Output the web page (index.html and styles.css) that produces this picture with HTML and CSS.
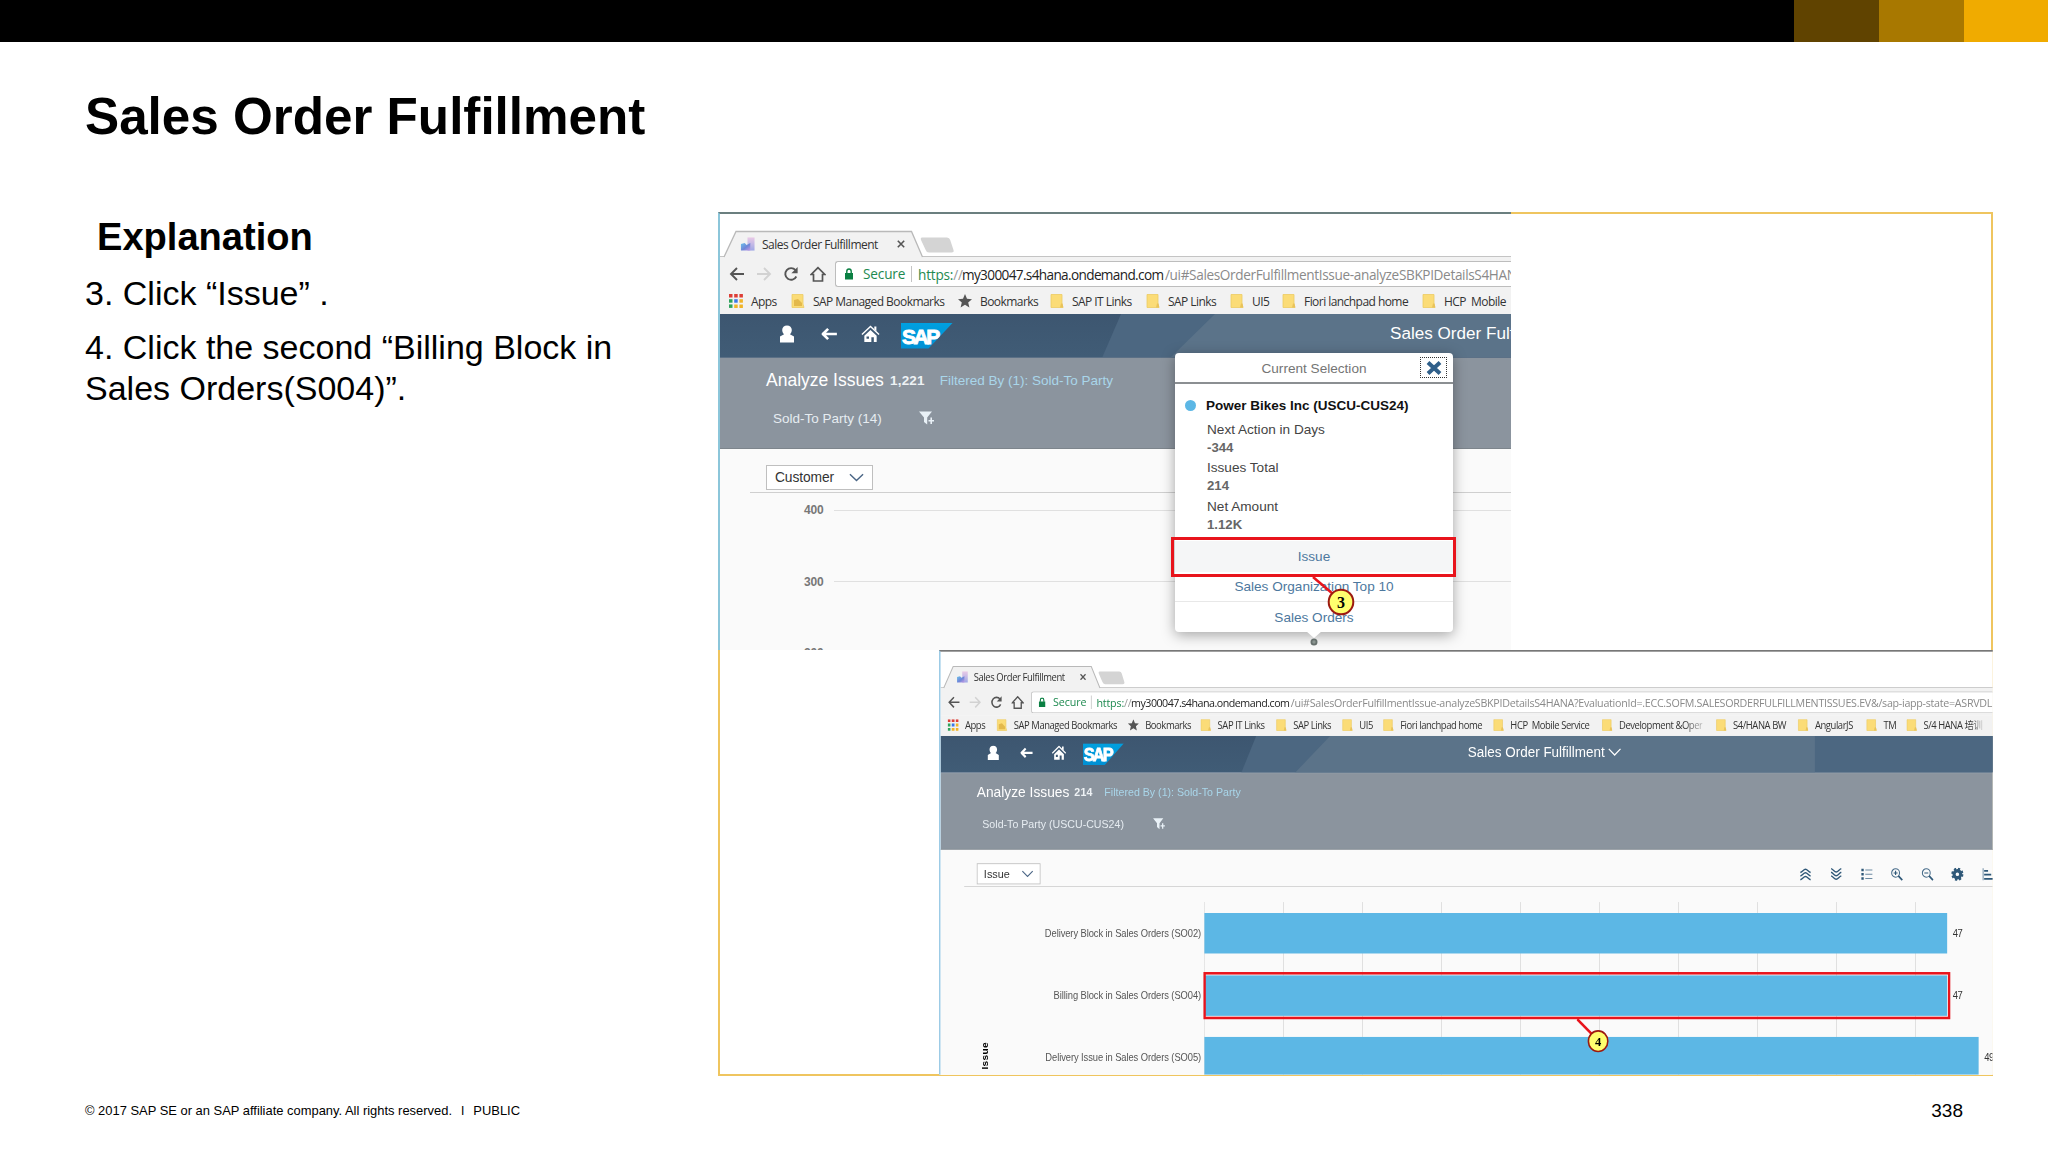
FILE: index.html
```html
<!DOCTYPE html>
<html lang="en">
<head>
<meta charset="utf-8">
<title>Sales Order Fulfillment</title>
<link rel="stylesheet" href="styles.css">
</head>
<body>
<svg class="defs" width="0" height="0" aria-hidden="true">
  <defs>
    <linearGradient id="favg" x1="0" y1="0" x2="1" y2="1"><stop offset="0" stop-color="#6cc0ea"/><stop offset=".55" stop-color="#6f86d8"/><stop offset="1" stop-color="#c79be4"/></linearGradient>
    <linearGradient id="favb" x1="0" y1="0" x2="0" y2="1"><stop offset="0" stop-color="#e9c9e6"/><stop offset="1" stop-color="#9fa8e6"/></linearGradient>
    <symbol id="i-fav" viewBox="0 0 16 16"><rect x="8" y="1" width="7.500" height="14" fill="url(#favb)"/><path d="M1 8l4-1 2 2 4-2v8H1z" fill="url(#favg)"/></symbol>
    <symbol id="i-tabx" viewBox="0 0 8 8"><path d="M.8.8l6.400 6.400M7.200.8L.8 7.200" stroke="#555" stroke-width="1.600"/></symbol>
    <symbol id="i-back" viewBox="0 0 16 16"><path d="M15 8H2M8 2L2 8l6 6" fill="none" stroke="#555" stroke-width="1.900"/></symbol>
    <symbol id="i-fwd" viewBox="0 0 16 16"><path d="M1 8h13M8 2l6 6-6 6" fill="none" stroke="#d2d2d2" stroke-width="1.900"/></symbol>
    <symbol id="i-reload" viewBox="0 0 16 16"><path d="M13.300 10.500A5.800 5.800 0 1 1 12.500 4.200" fill="none" stroke="#555" stroke-width="1.900"/><path d="M14.600 1v6.200H8.400z" fill="#555"/></symbol>
    <symbol id="i-home" viewBox="0 0 16 16"><path d="M8 1.600L1.200 8.500h2.300V15h9V8.500h2.300z" fill="none" stroke="#555" stroke-width="1.700"/></symbol>
    <symbol id="i-lock" viewBox="0 0 10 12"><path d="M1 5h8v6.500H1z" fill="#0b8043"/><path d="M2.800 5.500V3.200a2.200 2.200 0 0 1 4.400 0v2.300" fill="none" stroke="#0b8043" stroke-width="1.400"/></symbol>
    <symbol id="i-apps" viewBox="0 0 14 14"><path d="M0 0h3.500v3.500H0zM5.200 0h3.500v3.500H5.200zM10.400 0h3.500v3.500h-3.500z" fill="#dd3e36"/><path d="M0 5.200h3.500v3.500H0z" fill="#2fa35c"/><path d="M5.200 5.200h3.500v3.500H5.200z" fill="#3b78e7"/><path d="M10.400 5.200h3.500v3.500h-3.500z" fill="#f0b428"/><path d="M0 10.400h3.500v3.500H0z" fill="#2fa35c"/><path d="M5.200 10.400h3.500v3.500H5.200zM10.400 10.400h3.500v3.500h-3.500z" fill="#f0b428"/></symbol>
    <symbol id="i-folder" viewBox="0 0 14 14"><path d="M1 .5h11v9.500l1 3.500H1z" fill="#fbdc77" stroke="#eccb62" stroke-width=".8"/><path d="M11 9.500h1.500l.8 4H10z" fill="#e9c35a"/></symbol>
    <symbol id="i-folder2" viewBox="0 0 14 14"><path d="M1 .5h11v9.500l1 3.500H1z" fill="#fbdc77" stroke="#eccb62" stroke-width=".8"/><path d="M3 6l4-1 4 4v3H3z" fill="#e3b94c"/></symbol>
    <symbol id="i-star" viewBox="0 0 14 14"><path d="M7 0l2 4.800 5 .4-3.800 3.300L11.400 13.500 7 10.800 2.600 13.500l1.200-5L0 5.200l5-.4z" fill="#555"/></symbol>
    <symbol id="i-person" viewBox="0 0 16 18"><path d="M8 .5c2.900 0 4.800 1.900 4.800 4.600 0 1.900-.8 3.300-1.900 4.200L15 11.500V17.500H1v-6l4.100-2.200C4 8.400 3.200 7 3.200 5.100 3.200 2.400 5.100.5 8 .5z" fill="#fff"/></symbol>
    <symbol id="i-left" viewBox="0 0 20 16"><path d="M19 8H4M9 2.200L3 8l6 5.800" fill="none" stroke="#fff" stroke-width="3" stroke-linejoin="round"/></symbol>
    <symbol id="i-house" viewBox="0 0 20 18"><path d="M1 9.500L10 1l9 8.500" fill="none" stroke="#fff" stroke-width="1.500"/><path d="M14 1h2.200V6L14 4z" fill="#fff"/><path fill-rule="evenodd" d="M10 4.800l6.500 6v6.700h-3v-5.200h-2.600v5.200H3.500v-6.700zM5.800 11.500v2.600h2.600v-2.600z" fill="#fff"/></symbol>
    <symbol id="i-filter" viewBox="0 0 18 14"><path d="M1 .5h13L9.200 6.500v7L6 11V6.500z" fill="#e9f1f7"/><path d="M13.200 6.500v6.500M10.500 9.700H16" stroke="#e9f1f7" stroke-width="1.600"/></symbol>
    <symbol id="i-chev" viewBox="0 0 16 9"><path d="M1 1l7 6.800L15 1" fill="none" stroke="currentColor" stroke-width="1.500"/></symbol>
    <symbol id="i-up" viewBox="0 0 16 16"><path d="M1.500 6C4.500 5 5.500 2 8 2s3.500 3 6.500 4M1.500 10.300c3-1 4-4 6.500-4s3.500 3 6.500 4M1.500 14.600c3-1 4-4 6.500-4s3.500 3 6.500 4" fill="none" stroke="#2f5878" stroke-width="1.700"/></symbol>
    <symbol id="i-list" viewBox="0 0 16 16"><path d="M1 1.500h3v3H1zM1 6.500h3v3H1zM1 11.500h3v3H1z" fill="#2f5878"/><path d="M6 3h9M6 8h9M6 13h9" stroke="#6d8aa2" stroke-width="1.300"/></symbol>
    <symbol id="i-zin" viewBox="0 0 16 16"><circle cx="6.500" cy="6.500" r="5" fill="none" stroke="#466b89" stroke-width="1.300"/><path d="M6.500 4v5M4 6.500h5" stroke="#2f5878" stroke-width="1.400"/><path d="M10 10l5 5" stroke="#2f5878" stroke-width="2.200"/></symbol>
    <symbol id="i-zout" viewBox="0 0 16 16"><circle cx="6.500" cy="6.500" r="5" fill="none" stroke="#466b89" stroke-width="1.300"/><path d="M4 6.500h5" stroke="#2f5878" stroke-width="1.400"/><path d="M10 10l5 5" stroke="#2f5878" stroke-width="2.200"/></symbol>
    <symbol id="i-gear" viewBox="0 0 16 16"><circle cx="8" cy="8" r="4.200" fill="none" stroke="#2f5878" stroke-width="4"/><circle cx="8" cy="8" r="6.600" fill="none" stroke="#2f5878" stroke-width="2.400" stroke-dasharray="2.800 2.380"/></symbol>
    <symbol id="i-bars" viewBox="0 0 16 16"><path d="M1.700 1v14" stroke="#6d8aa2" stroke-width="1.200"/><path d="M3 4h5M3 8.500h9M3 13.500h13" stroke="#2f5878" stroke-width="2.200"/></symbol>
    <symbol id="i-close" viewBox="0 0 16 14"><path d="M2 1.500l12 11M14 1.500l-12 11" stroke="#2f5f8a" stroke-width="4"/></symbol>
  </defs>
</svg>

<div class="slide">
  <div class="brand-bar"><i class="gold-1"></i><i class="gold-2"></i><i class="gold-3"></i></div>
  <h1 class="title">Sales Order Fulfillment</h1>

  <main class="content">
    <section class="notes">
      <h2>Explanation</h2>
      <p>3. Click “Issue” .</p>
      <p>4. Click the second “Billing Block in<br>Sales Orders(S004)”.</p>
    </section>

    <section class="frame">
      <div class="shot shot-a">
        <div class="win">
          <div class="tabs">
            <svg class="tabshape" viewBox="0 0 240 28"><path d="M6 27L18 1.500H193.500L204.500 27" fill="#f2f2f2" stroke="#b9b9b9" stroke-width="1.300"/><path d="M204 7.500h25q2.500 0 3.200 2.500l3.300 10q.8 2.500-2 2.500H211q-2.500 0-3.300-2.500l-4.700-10q-.8-2.500 1-2.500z" fill="#d4d4d4"/></svg>
            <svg class="fav"><use href="#i-fav"/></svg><span class="tabname">Sales Order Fulfillment</span><svg class="tabx"><use href="#i-tabx"/></svg>
          </div>
          <div class="nav">
            <svg><use href="#i-back"/></svg><svg><use href="#i-fwd"/></svg><svg><use href="#i-reload"/></svg><svg><use href="#i-home"/></svg>
            <div class="omni"><svg class="lock"><use href="#i-lock"/></svg><span class="secure">Secure</span><span class="url"><span class="scheme">https:<b>//</b></span><span class="host">my300047.s4hana.ondemand.com</span><span class="path">/ui#SalesOrderFulfillmentIssue-analyzeSBKPIDetailsS4HANA</span></span></div>
          </div>
          <div class="marks">
            <span><svg><use href="#i-apps"/></svg>Apps</span><span><svg><use href="#i-folder2"/></svg>SAP Managed Bookmarks</span><span><svg><use href="#i-star"/></svg>Bookmarks</span><span><svg><use href="#i-folder"/></svg>SAP IT Links</span><span><svg><use href="#i-folder"/></svg>SAP Links</span><span><svg><use href="#i-folder"/></svg>UI5</span><span><svg><use href="#i-folder"/></svg>Fiori lanchpad home</span><span><svg><use href="#i-folder"/></svg>HCP&nbsp; Mobile</span>
          </div>
          <div class="shell">
            <svg class="facets" viewBox="0 0 1339 44" preserveAspectRatio="xMinYMin slice"><path d="M401 0h938v44H382z" fill="#4c6781"/><path d="M495 0h616v44H450z" fill="#5b7389"/></svg>
            <svg class="person"><use href="#i-person"/></svg><svg class="left"><use href="#i-left"/></svg><svg class="house"><use href="#i-house"/></svg>
            <span class="logo"><b>SAP</b></span><span class="app">Sales Order Fulfillment</span>
          </div>
          <div class="filterbar">
            <div class="line1"><span class="name">Analyze Issues</span><b class="count">1,221</b><span class="by">Filtered By (1): Sold-To Party</span></div>
            <div class="line2"><span class="party">Sold-To Party (14)</span><svg><use href="#i-filter"/></svg></div>
          </div>
          <div class="body">
            <div class="tools"><div class="select select-a">Customer<svg><use href="#i-chev"/></svg></div></div>
            <div class="plot">
              <div class="tick"><b>400</b><i></i></div>
              <div class="tick"><b>300</b><i></i></div>
              <div class="tick"><b>200</b><i></i></div>
            </div>
          </div>
        </div>
        <div class="popover">
          <header><span>Current Selection</span><div class="close"><svg><use href="#i-close"/></svg></div></header>
          <div class="facts">
            <h3>Power Bikes Inc (USCU-CUS24)</h3>
            <dl><dt>Next Action in Days</dt><dd>-344</dd><dt>Issues Total</dt><dd>214</dd><dt>Net Amount</dt><dd>1.12K</dd></dl>
          </div>
          <nav><a class="on">Issue</a><a class="org">Sales Organization Top 10</a><a class="ord">Sales Orders</a></nav>
          <svg class="beak" viewBox="0 0 20 16"><path d="M2 0l8 7 8-7z" fill="#fff"/><circle cx="10" cy="11" r="2.600" fill="#8a9590" stroke="#66706d" stroke-width="1.800"/></svg>
        </div>
        <div class="mark mark-3"></div>
        <svg class="call call-3" viewBox="0 0 44 44"><path d="M1 1l20 17" stroke="#e8141c" stroke-width="2.500"/><circle cx="29" cy="26" r="12.300" fill="#ffff6e" stroke="#9c1a10" stroke-width="2"/><text x="29" y="31.500" text-anchor="middle">3</text></svg>
      </div>

      <div class="shot shot-b">
        <div class="scaled">
        <div class="win">
          <div class="tabs">
            <svg class="tabshape" viewBox="0 0 240 28"><path d="M6 27L18 1.500H193.500L204.500 27" fill="#f2f2f2" stroke="#b9b9b9" stroke-width="1.300"/><path d="M204 7.500h25q2.500 0 3.200 2.500l3.300 10q.8 2.500-2 2.500H211q-2.500 0-3.300-2.500l-4.700-10q-.8-2.500 1-2.500z" fill="#d4d4d4"/></svg>
            <svg class="fav"><use href="#i-fav"/></svg><span class="tabname">Sales Order Fulfillment</span><svg class="tabx"><use href="#i-tabx"/></svg>
          </div>
          <div class="nav">
            <svg><use href="#i-back"/></svg><svg><use href="#i-fwd"/></svg><svg><use href="#i-reload"/></svg><svg><use href="#i-home"/></svg>
            <div class="omni"><svg class="lock"><use href="#i-lock"/></svg><span class="secure">Secure</span><span class="url"><span class="scheme">https:<b>//</b></span><span class="host">my300047.s4hana.ondemand.com</span><span class="path">/ui#SalesOrderFulfillmentIssue-analyzeSBKPIDetailsS4HANA?EvaluationId=.ECC.SOFM.SALESORDERFULFILLMENTISSUES.EV&amp;/sap-iapp-state=ASRVDL</span></span></div>
          </div>
          <div class="marks">
            <span><svg><use href="#i-apps"/></svg>Apps</span><span><svg><use href="#i-folder2"/></svg>SAP Managed Bookmarks</span><span><svg><use href="#i-star"/></svg>Bookmarks</span><span><svg><use href="#i-folder"/></svg>SAP IT Links</span><span><svg><use href="#i-folder"/></svg>SAP Links</span><span><svg><use href="#i-folder"/></svg>UI5</span><span><svg><use href="#i-folder"/></svg>Fiori lanchpad home</span><span><svg><use href="#i-folder"/></svg>HCP&nbsp; Mobile Service</span><span><svg><use href="#i-folder"/></svg><em>Development &amp;Oper</em></span><span><svg><use href="#i-folder"/></svg>S4/HANA BW</span><span><svg><use href="#i-folder"/></svg>AngularJS</span><span><svg><use href="#i-folder"/></svg>TM</span><span><svg><use href="#i-folder"/></svg><em>S/4 HANA 培训</em></span>
          </div>
          <div class="shell">
            <svg class="facets" viewBox="0 0 1339 44" preserveAspectRatio="xMinYMin slice"><path d="M401 0h938v44H382z" fill="#4c6781"/><path d="M495 0h616v44H450z" fill="#5b7389"/></svg>
            <svg class="person"><use href="#i-person"/></svg><svg class="left"><use href="#i-left"/></svg><svg class="house"><use href="#i-house"/></svg>
            <span class="logo"><b>SAP</b></span><span class="app">Sales Order Fulfillment</span><svg class="appchev"><use href="#i-chev"/></svg>
          </div>
          <div class="filterbar">
            <div class="line1"><span class="name">Analyze Issues</span><b class="count">214</b><span class="by">Filtered By (1): Sold-To Party</span></div>
            <div class="line2"><span class="party">Sold-To Party (USCU-CUS24)</span><svg><use href="#i-filter"/></svg></div>
          </div>
          <div class="body">
            <div class="tools"><div class="select select-b">Issue<svg><use href="#i-chev"/></svg></div>
              <div class="icons"><svg><use href="#i-up"/></svg><svg class="flip"><use href="#i-up"/></svg><svg><use href="#i-list"/></svg><svg><use href="#i-zin"/></svg><svg><use href="#i-zout"/></svg><svg><use href="#i-gear"/></svg><svg><use href="#i-bars"/></svg></div>
            </div>
            <div class="bars">
              <div class="axis"><span>Issue</span></div>
              <div class="labels"><span>Delivery Block in Sales Orders (SO02)</span><span>Billing Block in Sales Orders (SO04)</span><span>Delivery Issue in Sales Orders (SO05)</span></div>
              <div class="lanes">
                <div class="lane"><i style="width:944px"></i><span>47</span></div>
                <div class="lane"><i style="width:944px"></i><span>47</span></div>
                <div class="lane"><i style="width:984px"></i><span>49</span></div>
              </div>
            </div>
          </div>
        </div>
        <div class="mark mark-4"></div>
        <svg class="call call-4" viewBox="0 0 44 44"><path d="M1 1l20 19" stroke="#e8141c" stroke-width="3"/><circle cx="27.500" cy="27" r="12.300" fill="#ffff6e" stroke="#9c1a10" stroke-width="2"/><text x="27.500" y="32.500" text-anchor="middle">4</text></svg>
        </div>
      </div>
    </section>
  </main>

  <footer class="foot"><span>© 2017 SAP SE or an SAP affiliate company. All rights reserved.<i>ǀ</i>PUBLIC</span><b>338</b></footer>
</div>
</body>
</html>
```

FILE: styles.css
```css
* { box-sizing: border-box; }
body { margin: 0; background: #fff; font-family: "Liberation Sans", Arial, sans-serif; color: #000; }
svg { flex: none; display: block; }
.defs { position: absolute; }
.slide { width: 2048px; height: 1152px; display: flex; flex-direction: column; overflow: hidden; }

.brand-bar { height: 42px; flex: none; background: #000; display: flex; justify-content: flex-end; }
.brand-bar i { width: 85px; }
.gold-1 { background: #604300; }
.gold-2 { background: #a87800; }
.brand-bar .gold-3 { background: #f0ab00; width: 84px; }

.title { margin: 0; padding-left: 85px; height: 170px; flex: none; font-size: 51.200px; line-height: 60px; padding-top: 45px; white-space: nowrap; }
.content { display: flex; height: 864px; flex: none; }
.notes { width: 718px; flex: none; padding-left: 85px; font-size: 34px; line-height: 41px; white-space: nowrap; }
.notes h2 { margin: 5px 0 15px 12px; font-size: 38.100px; line-height: 41px; }
.notes p { margin: 0 0 13px; }

.frame { position: relative; width: 1275px; display: flex; flex-direction: column; border: 2px solid #efc55f; }
.shot { position: relative; overflow: hidden; flex: none; }
.shot-a { width: 793px; height: 438px; margin: -2px 0 0 -2px; }
.shot-b { width: 1054px; height: 425px; margin-left: 219px; }
.scaled { width: 1339px; height: 504px; transform: scale(.787, .843); transform-origin: 0 0; }

/* browser window */
.win { width: 100%; height: 100%; display: flex; flex-direction: column; background: #fff; border-left: 2px solid #8cc6da; border-top: 2px solid #6b7f7f; overflow: hidden; }
.scaled .win { border-left-color: #9ccbe6; border-top-color: #777; }
.tabs { position: relative; height: 43px; flex: none; display: flex; align-items: center; padding: 18px 0 0 20px; border-bottom: 1px solid #c4c4c4; font: 12px "Open Sans", "Noto Sans", sans-serif; color: #333; }
.tabshape { position: absolute; left: -2px; top: 16px; width: 240px; height: 28px; }
.fav { position: relative; width: 15px; height: 16px; }
.tabname { position: relative; width: 137px; padding-left: 7px; white-space: nowrap; letter-spacing: -.5px; }
.tabx { position: relative; width: 8px; height: 8px; margin-left: 5px; }
.nav { height: 33px; flex: none; display: flex; align-items: center; gap: 11px; padding: 1px 0 0 9px; background: #f2f2f2; }
.nav > svg { width: 16px; height: 16px; }
.omni { flex: 1; height: 26px; border: 1px solid #bdbdbd; border-right: 0; border-radius: 3px 0 0 3px; background: #fff; display: flex; align-items: center; padding-left: 8px; margin-left: -2px; overflow: hidden; font: 13.600px "Open Sans", "Noto Sans", sans-serif; white-space: nowrap; }
.lock { width: 10px; height: 12px; }
.secure { width: 49px; margin-left: 9px; flex: none; color: #1e8a50; letter-spacing: -.15px; border-right: 1px solid #c4c4c4; line-height: 16px; }
.url { display: flex; margin-left: 6px; }
.url span { flex: none; }
.scheme { color: #1e8a50; width: 44px; letter-spacing: -.2px; }
.scheme b { font-weight: 400; color: #999; }
.host { color: #222; width: 203px; letter-spacing: -.640px; }
.path { color: #8a8a8a; letter-spacing: -.360px; }
.marks { height: 24px; flex: none; display: flex; align-items: center; padding: 0 0 2px 9px; background: #f2f2f2; font: 12px "Open Sans", "Noto Sans", "Noto Sans CJK SC", sans-serif; color: #333; white-space: nowrap; letter-spacing: -.550px; }
.marks span { flex: none; display: flex; align-items: center; gap: 8px; height: 18px; }
.marks svg { width: 14px; height: 14px; }
.marks em { font-style: normal; -webkit-mask-image: linear-gradient(90deg, #000 78%, rgba(0,0,0,.25)); mask-image: linear-gradient(90deg, #000 78%, rgba(0,0,0,.25)); }
.marks span:nth-child(1) { width: 62px; }
.marks span:nth-child(2) { width: 167px; }
.marks span:nth-child(3) { width: 92px; }
.marks span:nth-child(4) { width: 96px; }
.marks span:nth-child(5) { width: 84px; }
.marks span:nth-child(6) { width: 52px; }
.marks span:nth-child(7) { width: 140px; }
.marks span:nth-child(8) { width: 138px; }
.marks span:nth-child(9) { width: 145px; }
.marks span:nth-child(10) { width: 104px; }
.marks span:nth-child(11) { width: 87px; }
.marks span:nth-child(12) { width: 51px; }

/* shell header */
.shell { position: relative; height: 44px; flex: none; display: flex; align-items: center; padding-left: 59px; background: linear-gradient(#3d5670, #405c76); border-bottom: 1px solid #5b7086; overflow: hidden; }
.facets { position: absolute; left: 0; top: 0; width: 1339px; height: 44px; }
.shell > *:not(.facets) { position: relative; }
.person { width: 16px; height: 18px; margin-top: -3px; }
.left { width: 20px; height: 14px; margin: -3px 0 0 24px; }
.house { width: 19px; height: 18px; margin: -3px 0 0 22px; }
.logo { width: 52px; height: 26px; margin-left: 21px; flex: none; background: linear-gradient(#00a0e0, #0090d4); clip-path: polygon(0 0, 100% 0, 53% 100%, 0 100%); color: #fff; font-size: 21px; line-height: 27px; letter-spacing: -2.500px; -webkit-text-stroke: .9px #fff; text-indent: 1px; }
.app { margin: -3px 0 0 437px; color: #fff; font-size: 17.100px; white-space: nowrap; }
.appchev { width: 17px; height: 10px; margin: -6px 0 0 4px; color: #fff; }

.filterbar { height: 91px; flex: none; background: #8b949e; border-bottom: 1px solid #7d858c; padding-left: 46px; white-space: nowrap; }
.line1 { display: flex; align-items: center; height: 44px; color: #fff; }
.name { width: 124px; font-size: 17.500px; }
.count { font-size: 13.500px; letter-spacing: .2px; padding-right: 15px; color: #eef2f5; }
.by { font-size: 13.500px; color: #a9d6ea; }
.line2 { display: flex; align-items: center; height: 32px; padding-left: 7px; color: #e6ecf1; font-size: 13.500px; }
.line2 svg { width: 18px; height: 14px; margin-left: 36px; }

.body { flex: 1; background: #fafafa; padding-left: 30px; overflow: hidden; }
.tools { height: 44px; border-bottom: 1px solid #cfcfcf; display: flex; align-items: center; padding: 16px 0 0 16px; }
.select { height: 25px; border: 1px solid #bfbfbf; background: #fff; display: flex; align-items: center; justify-content: space-between; padding: 0 8px; margin-top: -2px; font-size: 13.800px; color: #333; }
.select svg { width: 15px; height: 9px; color: #4a6585; }
.select-a { width: 107px; letter-spacing: -.1px; }
.select-b { width: 81px; }
.icons { display: flex; gap: 22.600px; margin: -1px -2px 0 auto; }
.icons svg { width: 16px; height: 16px; }
.flip { transform: scaleY(-1); }

.plot { padding: 9px 0 0 46px; }
.tick { display: flex; align-items: center; height: 16px; margin-bottom: 55.500px; color: #777; }
.tick b { width: 38px; padding-left: 8px; font-size: 12px; letter-spacing: -.2px; }
.tick i { flex: 1; height: 1px; background: #e0e0e0; }

.bars { display: flex; height: 230px; padding-top: 18px; }
.axis { width: 40px; position: relative; }
.axis span { position: absolute; left: 19px; top: 166px; writing-mode: vertical-rl; transform: rotate(180deg); font-weight: 700; font-size: 12px; letter-spacing: .4px; }
.labels { width: 265px; padding: 13px 4px 0 0; font-size: 11.900px; color: #555; text-align: right; letter-spacing: -.1px; white-space: nowrap; }
.labels span, .lane { display: flex; align-items: center; justify-content: flex-end; height: 48px; margin-bottom: 25.500px; }
.lanes { flex: 1; padding-top: 13px; overflow: hidden; background: repeating-linear-gradient(90deg, #e0e0e0 0 1px, transparent 1px 100.400px); }
.lane { justify-content: flex-start; gap: 7px; font-size: 12px; color: #333; letter-spacing: -.5px; }
.lane i { height: 48px; flex: none; background: #5cb7e5; }

/* selection popover */
.popover { position: absolute; left: 457px; top: 141px; width: 278px; height: 279px; background: #fff; border-radius: 4px; box-shadow: 0 3px 14px rgba(0,0,0,.35); color: #444; white-space: nowrap; }
.popover header { position: relative; height: 31px; border-bottom: 2px solid #8b8f92; text-align: center; font-size: 13.600px; line-height: 31px; color: #757575; }
.close { position: absolute; right: 6px; top: 4px; width: 27px; height: 21px; border: 1px dotted #333; display: grid; place-items: center; }
.close svg { width: 16px; height: 14px; }
.facts { position: relative; padding: 13px 0 0 31px; height: 157px; }
.facts::before { content: ""; position: absolute; left: 10px; top: 16px; width: 11px; height: 11px; border-radius: 50%; background: #5cb7e5; }
.facts h3 { margin: 0 0 4.500px; font-size: 13.500px; line-height: 18px; color: #111; }
.facts dl { margin: 0 0 0 1px; }
.facts dt { font-size: 13.600px; line-height: 20px; }
.facts dd { margin: 0 0 2.500px; font-size: 13.200px; line-height: 16px; font-weight: 700; color: #666; }
.popover nav { display: flex; flex-direction: column; text-align: center; font-size: 13.600px; color: #4d789e; }
.popover nav a { line-height: 31px; }
.popover nav .on { height: 31px; background: #f5f6f7; line-height: 31px; }
.popover nav .org { border-bottom: 1px solid #e8e8e8; line-height: 29px; }
.beak { position: absolute; left: 129px; top: 278px; width: 20px; height: 16px; }
.mark { position: absolute; border: 3px solid #e8141c; }
.mark-3 { left: 453px; top: 325px; width: 285px; height: 40px; }
.mark-4 { left: 336px; top: 382px; width: 949px; height: 56px; border-width: 3px; }
.call { position: absolute; width: 44px; height: 44px; }
.call text { font: 700 16px "Liberation Serif", serif; }
.call-3 { left: 594px; top: 364px; }
.call-4 { left: 810px; top: 437px; }

.foot { display: flex; justify-content: space-between; align-items: center; margin: 18px 85px 0; height: 33px; font-size: 12.930px; }
.foot i { font-style: normal; margin: 0 9px; }
.foot b { font-weight: 400; font-size: 19px; }
```
